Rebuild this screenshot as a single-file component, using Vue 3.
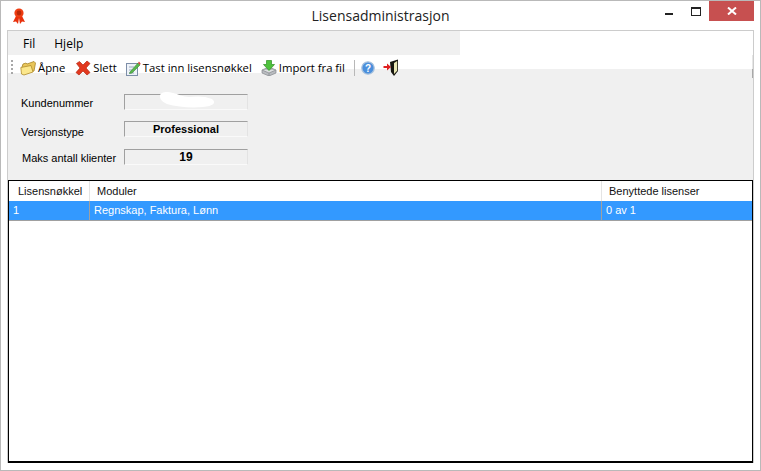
<template>
  <div class="window">
    <header class="titlebar">
      <svg class="app-icon" width="16" height="18" viewBox="0 0 16 18">
        <path d="M5 9 L2 15 L5 14.5 L7 17 L8 11 L9 17 L11 14.5 L14 15 L11 9Z" fill="#e8300c" />
        <circle cx="8" cy="6" r="4.6" fill="#ef3d12" />
        <circle cx="8" cy="6" r="2.4" fill="#b82a08" />
      </svg>
      <div class="title">Lisensadministrasjon</div>
      <div class="controls">
        <span class="minimize"></span>
        <span class="maximize"></span>
        <span class="close">
          <svg width="10" height="8" viewBox="0 0 10 8"><path d="M1 0.5 L9 7.5 M9 0.5 L1 7.5" stroke="#fff" stroke-width="2" /></svg>
        </span>
      </div>
    </header>

    <div class="client">
      <nav class="menubar">
        <span v-for="m in menus" :key="m" class="menu-item">{{ m }}</span>
      </nav>

      <div class="toolbar">
        <span class="grip"></span>
        <span class="tool open">
          <svg width="16" height="16" viewBox="0 0 16 16">
            <path d="M2 7 L3 4 L6 3 L7 4 L14 1.5 L15.5 3 L14 11 L4 14Z" fill="#e9c65a" stroke="#a8862a" stroke-width="0.8" />
            <path d="M0.8 7.5 L11 5.5 L13 12 L4 15 L1.5 14Z" fill="#fbe78c" stroke="#b08c2c" stroke-width="0.8" />
          </svg>
          Åpne
        </span>
        <span class="tool">
          <svg width="16" height="16" viewBox="0 0 16 16">
            <path d="M1.5 3.5 L4.5 1.5 L8 5 L12 1 L15 3.5 L11 8 L15 12.5 L12 15 L8 11 L4 15 L1 12.5 L5 8Z" fill="#e2391f" stroke="#b52a14" stroke-width="0.7" />
          </svg>
          Slett
        </span>
        <span class="tool key">
          <svg width="16" height="16" viewBox="0 0 16 16">
            <rect x="1.5" y="3.5" width="11" height="12" fill="#eef2f8" stroke="#7d8ea8" />
            <path d="M4 7 H9 M4 10 H8 M4 13 H9" stroke="#9aa9bf" />
            <path d="M5 12 L13 3 L15 5 L7 13 L4.5 13.5Z" fill="#58b84c" stroke="#3c8a34" stroke-width="0.6" />
            <path d="M13 3 L14 1.5 L15.6 3.5 L15 5Z" fill="#d8453a" />
          </svg>
          Tast inn lisensnøkkel
        </span>
        <span class="tool">
          <svg width="16" height="16" viewBox="0 0 16 16">
            <path d="M1 10 L8 7 L15 10 L15 13 L8 16 L1 13Z" fill="#b9bcc0" stroke="#85888c" stroke-width="0.7" />
            <path d="M1 10 L8 13 L15 10 M8 13 V16" fill="#dcdee0" stroke="#85888c" stroke-width="0.7" />
            <path d="M5.5 0.5 H10.5 V4.5 H13.5 L8 10.5 L2.5 4.5 H5.5Z" fill="#4ec23c" stroke="#2f8f25" stroke-width="0.7" />
          </svg>
          Import fra fil
        </span>
        <span class="sep"></span>
        <span class="tool help">
          <svg width="14" height="14" viewBox="0 0 14 14">
            <circle cx="7" cy="7" r="6.2" fill="#4b8fdc" stroke="#a9c3de" stroke-width="1.3" />
            <text x="7" y="11" text-anchor="middle" class="help-mark">?</text>
          </svg>
        </span>
        <span class="tool exit">
          <svg width="16" height="18" viewBox="0 0 16 18">
            <path d="M7 3 L15 0.5 L15 12 L11 17 L8 13Z" fill="#16160f" />
            <path d="M11 4 L14.2 2 L14.2 11.8 L11 15Z" fill="#e8e6b4" />
            <path d="M0.5 7 H4 V4.5 L8 8 L4 11.5 V9 H0.5Z" fill="#e02020" />
          </svg>
        </span>
        <span class="edge"></span>
      </div>

      <section class="form">
        <div v-for="f in fields" :key="f.label" class="field" :class="f.cls">
          <label class="field-label">{{ f.label }}</label>
          <div class="field-value">
            {{ f.value }}
            <svg v-if="!f.value" class="blob" width="60" height="18" viewBox="0 0 60 18">
              <path d="M3 5 C3 1 10 0 16 2 C21 3 26 6 32 6 C40 5 48 5 55 8 C60 12 56 15 46 16 C34 17 20 16 10 13 C6 11 3 9 3 5Z" fill="#fff" />
            </svg>
          </div>
        </div>
      </section>

      <div class="grid">
        <div class="row head">
          <div v-for="c in headers" :key="c" class="cell">{{ c }}</div>
        </div>
        <div class="row selected">
          <div v-for="c in rowData" :key="c" class="cell">{{ c }}</div>
        </div>
      </div>
    </div>
  </div>
</template>

<script setup>
const menus = ['Fil', 'Hjelp']

const fields = [
  { label: 'Kundenummer', value: '', cls: 'customer' },
  { label: 'Versjonstype', value: 'Professional', cls: 'version' },
  { label: 'Maks antall klienter', value: '19', cls: 'clients' }
]

const headers = ['Lisensnøkkel', 'Moduler', 'Benyttede lisenser']
const rowData = ['1', 'Regnskap, Faktura, Lønn', '0 av 1']
</script>

<style>
html, body {
  margin: 0;
  background: #fff;
  overflow: hidden;
}
</style>

<style scoped>
.window {
  box-sizing: border-box;
  width: 761px;
  height: 471px;
  border: 1px solid #b9b9b9;
  background: #fff;
  display: flex;
  flex-direction: column;
  padding: 0 6px 7px 6px;
  font-family: "Liberation Sans", Arial, sans-serif;
  color: #000;
}

.titlebar {
  height: 29px;
  flex: none;
  position: relative;
  display: flex;
  justify-content: center;
}

.app-icon {
  position: absolute;
  left: 4px;
  top: 6px;
}

.title {
  font-family: "Open Sans", sans-serif;
  font-size: 14px;
  line-height: 30px;
  color: #222;
}

.controls {
  position: absolute;
  right: 0;
  top: 0;
  height: 20px;
  display: flex;
}

.minimize {
  position: absolute;
  right: 81px;
  top: 12px;
  width: 8px;
  height: 2px;
  background: #222;
}

.maximize {
  position: absolute;
  right: 53px;
  top: 6px;
  box-sizing: border-box;
  width: 10px;
  height: 9px;
  border: 1px solid #222;
  border-top-width: 2px;
}

.close {
  width: 45px;
  height: 20px;
  background: #c75050;
  display: flex;
  align-items: center;
  justify-content: center;
}

.client {
  flex: 1;
  min-height: 0;
  border-top: 1px solid #ccc;
  border-left: 1px solid #ccc;
  border-right: 1px solid #ccc;
  background: #f0f0f0;
  display: flex;
  flex-direction: column;
  position: relative;
}

.menubar {
  height: 24px;
  flex: none;
  box-sizing: border-box;
  width: 452px;
  padding: 0 0 0 8px;
  display: flex;
  align-items: center;
  font-family: "Open Sans", sans-serif;
  font-size: 12px;
}

.menu-item {
  padding: 0 7px;
  margin-right: 5px;
}

.menubar::after {
  content: "";
  position: absolute;
  left: 452px;
  right: 0;
  top: 0;
  height: 24px;
  background: #fff;
}

.toolbar {
  height: 25px;
  flex: none;
  position: relative;
  display: flex;
  align-items: center;
  padding-left: 3px;
  font-family: "Open Sans", sans-serif;
  font-size: 11.3px;
  background:
    linear-gradient(#fff, #fff) 0 0 / 292px 18px no-repeat,
    linear-gradient(#fff, #fff) 0 0 / 100% 14px no-repeat,
    #f0f0f0;
  gap: 8px;
}

.grip {
  width: 2px;
  height: 15px;
  background: repeating-linear-gradient(#a8a8a8 0 2px, transparent 2px 4px);
  margin-right: -1px;
}

.tool {
  display: flex;
  align-items: center;
  gap: 2px;
  white-space: nowrap;
}

.tool svg {
  flex: none;
}

.tool.open {
  margin-right: 2px;
}

.tool.key {
  margin-right: 1px;
}

.tool.help {
  margin-left: -2px;
}

.help-mark {
  font-family: "Liberation Sans", sans-serif;
  font-size: 10px;
  font-weight: 700;
  fill: #fff;
}

.sep {
  width: 1px;
  height: 16px;
  margin-left: 1px;
  background: #b8b8b8;
}

.edge {
  position: absolute;
  right: 0;
  top: 0;
  width: 1px;
  height: 23px;
  background: linear-gradient(#e6e6e6 14px, #a8a8a8 14px);
}

.form {
  height: 100px;
  flex: none;
  box-sizing: border-box;
  padding: 14px 0 0 13px;
  display: flex;
  flex-direction: column;
  gap: 11px;
  font-size: 11px;
}

.field {
  display: flex;
  align-items: center;
  height: 16px;
}

.field-label {
  width: 103px;
  flex: none;
}

.customer .field-label {
  margin-top: 2px;
}

.version .field-label {
  margin-top: 6px;
}

.clients {
  margin-top: 1px;
}

.clients .field-label {
  box-sizing: border-box;
  padding-left: 1px;
  margin-top: 2px;
}

.field-value {
  box-sizing: border-box;
  position: relative;
  width: 124px;
  height: 16px;
  border: 1px solid;
  border-color: #a0a0a0 #e3e3e3 #fafafa #a0a0a0;
  font-weight: 700;
  font-size: 11px;
  line-height: 14px;
  text-align: center;
}

.clients .field-value {
  font-size: 12px;
}

.blob {
  position: absolute;
  left: 32px;
  top: -4px;
}

.grid {
  flex: 1;
  min-height: 0;
  background: #fff;
  border: 1px solid #000;
  border-bottom-width: 2px;
  font-size: 11px;
}

.row {
  display: grid;
  grid-template-columns: 81px 512px 1fr;
}

.head {
  height: 20px;
  line-height: 20px;
  color: #111;
}

.head .cell {
  padding-left: 7px;
  border-right: 1px solid #e4e4e4;
  box-sizing: border-box;
}

.head .cell:first-child {
  padding-left: 9px;
}

.selected {
  height: 20px;
  line-height: 19px;
  background: #3399ff;
  color: #fff;
  border-bottom: 1px solid #a0a0a0;
  box-sizing: border-box;
}

.selected .cell {
  padding-left: 4px;
  border-right: 1px solid #a0a0a0;
  box-sizing: border-box;
}

.selected .cell:last-child,
.head .cell:last-child {
  border-right: none;
}
</style>
